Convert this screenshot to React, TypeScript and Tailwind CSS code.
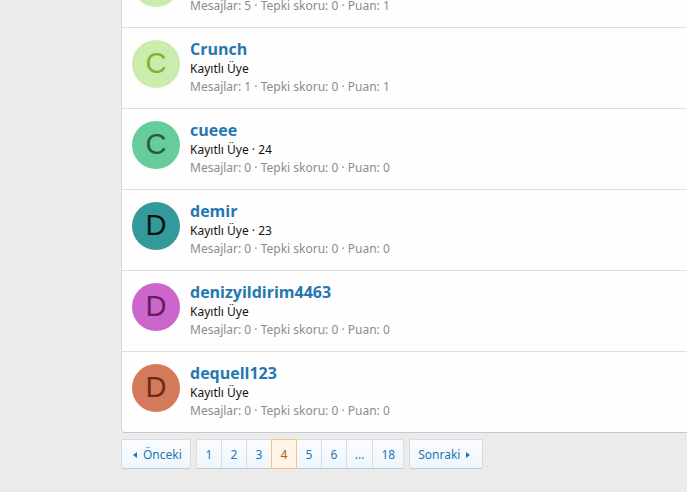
import clsx from "clsx";

type Member = {
  id: number;
  name?: string;
  age?: number;
  messages: number;
  points: number;
  avatar: string;
};

const members: Member[] = [
  { id: 1, messages: 5, points: 1, avatar: "bg-[#cdebad] text-[#76b82e]" },
  { id: 2, name: "Crunch", messages: 1, points: 1, avatar: "bg-[#cdebad] text-[#76b82e]" },
  { id: 3, name: "cueee", age: 24, messages: 0, points: 0, avatar: "bg-[#66cc99] text-[#206040]" },
  { id: 4, name: "demir", age: 23, messages: 0, points: 0, avatar: "bg-[#339999] text-[#061313]" },
  { id: 5, name: "denizyildirim4463", messages: 0, points: 0, avatar: "bg-[#cc66cc] text-[#602060]" },
  { id: 6, name: "dequell123", messages: 0, points: 0, avatar: "bg-[#d47a5a] text-[#6a2c16]" },
];

const pages = ["1", "2", "3", "4", "5", "6", "...", "18"];
const currentPage = "4";

function MemberRow({ member }: { member: Member }) {
  return (
    <li className="flex gap-2.5 px-2.5 py-3 border-t border-[#dfdfdf]">
      <span
        className={clsx(
          "flex items-center justify-center w-12 h-12 pb-0.5 rounded-full shrink-0 font-['Liberation_Sans',Arial,sans-serif] text-[29px] leading-none",
          member.avatar
        )}
      >
        {member.name?.[0].toUpperCase()}
      </span>
      <div className="flex flex-col justify-end min-w-0 min-h-14">
        {member.name && (
          <>
            <h3 className="mb-0.5 text-base leading-[18px] font-bold font-['Open_Sans',sans-serif]">
              <a href="#" className="text-[#2577b1] hover:underline">
                {member.name}
              </a>
            </h3>
            <p className="text-xs leading-[18px] text-[#141414]">
              Kayıtlı Üye{member.age ? ` · ${member.age}` : ""}
            </p>
          </>
        )}
        <p className="text-xs leading-[18px] text-[#8c8c8c]">
          Mesajlar: {member.messages} · Tepki skoru: 0 · Puan: {member.points}
        </p>
      </div>
    </li>
  );
}

function Arrow({ direction }: { direction: "left" | "right" }) {
  return (
    <svg className="w-1 h-2 shrink-0" viewBox="0 0 4 8" fill="currentColor" aria-hidden="true">
      <path d={direction === "left" ? "M4 1v6L0 4z" : "M0 1v6l4-3z"} />
    </svg>
  );
}

const jump =
  "flex items-center h-[30px] rounded-xs border border-[#dcdcdc] border-b-[#c8c8c8] bg-linear-to-b from-[#fafcff] to-[#edf6fd]";

export default function App() {
  return (
    <div className="min-h-screen overflow-hidden bg-[#ebebeb] pl-[121px] font-['Noto_Sans','Open_Sans',sans-serif]">
      {/* Member list, scrolled part way through the first row */}
      <ol className="-mt-[54px] bg-[#fefefe] border-l border-b border-l-[#d8d8d8] border-b-[#c8c8c8] rounded-bl">
        {members.map((member) => (
          <MemberRow key={member.id} member={member} />
        ))}
      </ol>

      {/* Pagination */}
      <nav className="flex gap-[5px] mt-1.5 text-xs text-[#2577b1]">
        <a href="#" className={clsx(jump, "gap-1.5 pt-0.5 pl-[11px] pr-2")}>
          <Arrow direction="left" />
          Önceki
        </a>
        <ul className={jump}>
          {pages.map((page) => (
            <li
              key={page}
              className={clsx(
                "border-r last:border-r-0",
                page === currentPage
                  ? "-my-px -ml-px border border-[#f9c479] bg-[#fff4e5] text-[#b06008]"
                  : "border-[#dcdcdc]"
              )}
            >
              <a
                href="#"
                aria-current={page === currentPage ? "page" : undefined}
                className="flex items-center justify-center h-7 min-w-6 px-2 pt-0.5"
              >
                {page}
              </a>
            </li>
          ))}
        </ul>
        <a href="#" className={clsx(jump, "gap-1.5 pt-0.5 pl-2 pr-3")}>
          Sonraki
          <Arrow direction="right" />
        </a>
      </nav>
    </div>
  );
}
